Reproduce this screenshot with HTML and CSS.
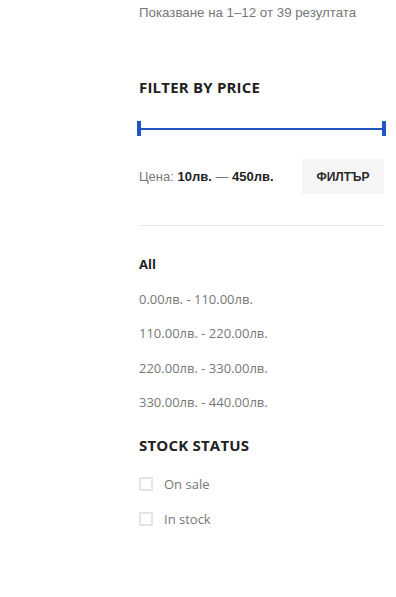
FILE: index.html
```html
<!DOCTYPE html>
<html lang="bg">
<head>
    <meta charset="UTF-8">
    <meta name="viewport" content="width=device-width, initial-scale=1.0">
    <title>Магазин</title>
    <link rel="stylesheet" href="styles.css">
</head>
<body>

<div class="sidebar">
    <p class="result-count">Показване на 1–12 от 39 резултата</p>

    <section class="widget price-widget">
        <h3 class="widget-title">Filter by price</h3>

        <div class="price-slider">
            <span class="slider-range"></span>
            <span class="slider-handle left"></span>
            <span class="slider-handle right"></span>
        </div>

        <div class="price-row">
            <div class="price-label">Цена: <strong>10лв.</strong> — <strong>450лв.</strong></div>
            <button class="filter-btn" type="button">Филтър</button>
        </div>
    </section>

    <ul class="price-list">
        <li class="current"><a href="#">All</a></li>
        <li><a href="#">0.00лв. - 110.00лв.</a></li>
        <li><a href="#">110.00лв. - 220.00лв.</a></li>
        <li><a href="#">220.00лв. - 330.00лв.</a></li>
        <li><a href="#">330.00лв. - 440.00лв.</a></li>
    </ul>

    <section class="widget stock-widget">
        <h3 class="widget-title">Stock status</h3>
        <ul class="check-list">
            <li><span class="check-box"></span>On sale</li>
            <li><span class="check-box"></span>In stock</li>
        </ul>
    </section>
</div>

</body>
</html>
```

FILE: styles.css
```css
body {
    margin: 0;
    padding: 0;
    background-color: #fff;
    font-family: "Open Sans", sans-serif;
    color: #777;
}

.sidebar {
    width: 245px;
    margin-left: 139px;
}

.result-count {
    font-family: "Liberation Sans", Arial, sans-serif;
    font-size: 13.3px;
    line-height: 20px;
    margin: 3px 0 0;
    color: #787878;
}

.widget-title {
    font-size: 15px;
    font-weight: 700;
    letter-spacing: 0.2px;
    text-transform: uppercase;
    color: #222;
    margin: 0;
    line-height: 20px;
}

.price-widget {
    margin-top: 54px;
}

.price-slider {
    position: relative;
    height: 15px;
    margin: 24px 0 0 -2px;
    width: 249px;
}

.slider-range {
    position: absolute;
    left: 2px;
    right: 2px;
    top: 7px;
    height: 2px;
    background-color: #2255c4;
}

.slider-handle {
    position: absolute;
    top: 0;
    width: 4px;
    height: 15px;
    background-color: #2255c4;
}

.slider-handle.left {
    left: 0;
}

.slider-handle.right {
    right: 0;
}

.price-row {
    display: flex;
    align-items: center;
    justify-content: space-between;
    margin-top: 23px;
    padding-bottom: 31px;
    border-bottom: 1px solid #e6e6e6;
}

.price-label {
    font-family: "Liberation Sans", Arial, sans-serif;
    font-size: 13px;
    color: #777;
}

.price-label strong {
    color: #222;
}

.filter-btn {
    width: 82px;
    height: 35px;
    border: none;
    background-color: #f5f5f5;
    font-family: "Liberation Sans", Arial, sans-serif;
    font-size: 12px;
    font-weight: 700;
    text-transform: uppercase;
    color: #2a2a2a;
    cursor: pointer;
}

.price-list {
    list-style: none;
    margin: 28px 0 0;
    padding: 0;
}

.price-list li {
    font-size: 13px;
    line-height: 20px;
    margin-bottom: 14.6px;
}

.price-list a {
    color: #777;
    text-decoration: none;
}

.price-list li.current a {
    color: #222;
    font-weight: 700;
}

.stock-widget {
    margin-top: 23px;
}

.check-list {
    list-style: none;
    margin: 19px 0 0;
    padding: 0;
}

.check-list li {
    display: flex;
    align-items: center;
    font-size: 13px;
    line-height: 20px;
    margin-bottom: 15px;
    color: #777;
}

.check-box {
    width: 10px;
    height: 10px;
    border: 2px solid #e4e4e4;
    margin-right: 11px;
}
```
